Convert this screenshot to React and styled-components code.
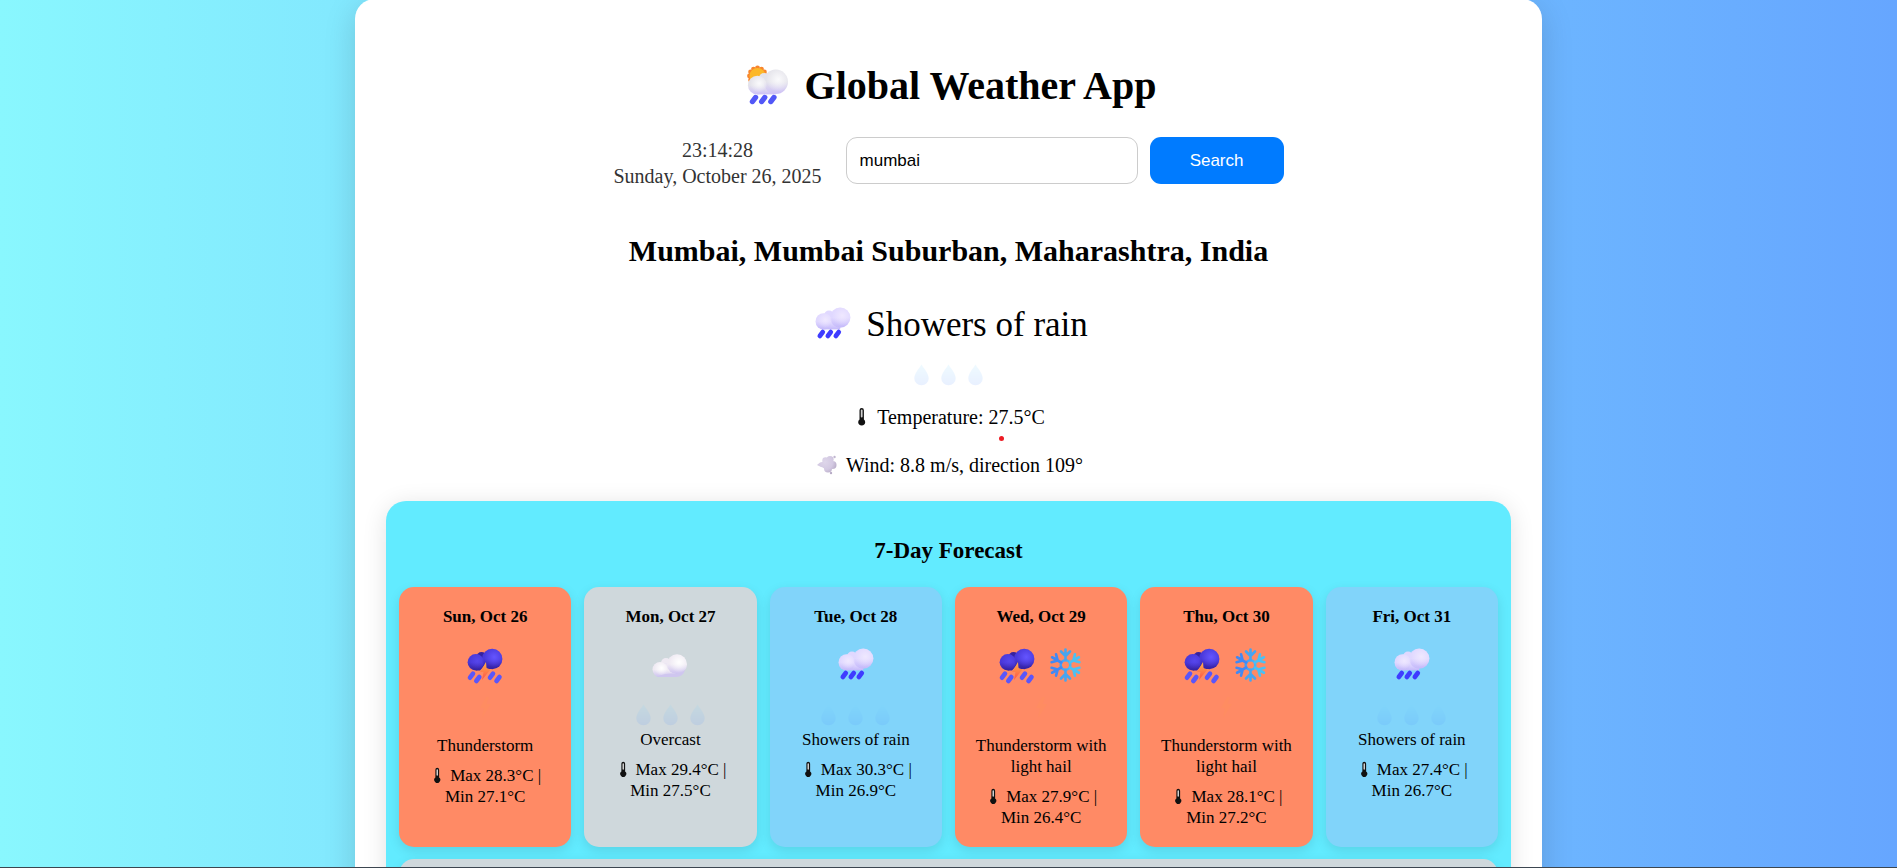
import React, { useState } from "react";
import styled, { createGlobalStyle } from "styled-components";

const GlobalStyle = createGlobalStyle`
  * { box-sizing: border-box; }
  html { scrollbar-width: none; }
  body {
    margin: 0;
    color: #000;
    font-family: "Liberation Serif", "Times New Roman", serif;
    background: linear-gradient(to right, #89f7fe, #66a6ff);
  }
`;

const Page = styled.div`
  min-height: 100vh;
  display: flex;
  justify-content: center;
  align-items: flex-start;
`;

const WindowEdge = styled.div`
  position: fixed;
  left: 0;
  right: 0;
  bottom: 0;
  height: 1px;
  background: #3c4650;
`;

const Panel = styled.main`
  width: 90%;
  max-width: 1187px;
  margin-top: -1px;
  padding: 60px 31px 31px;
  display: flex;
  flex-direction: column;
  align-items: center;
  background: #fff;
  border-radius: 20px;
  box-shadow: 0 8px 32px rgba(0, 0, 0, 0.15);
`;

const Title = styled.h1`
  margin: 0 0 24px;
  display: flex;
  align-items: center;
  gap: 10px;
  font-size: 40px;
  line-height: 46px;
`;

const Toolbar = styled.div`
  display: flex;
  align-items: flex-start;
  flex-wrap: wrap;
  justify-content: center;
  gap: 24px;
`;

const Clock = styled.div`
  color: #333;
  font-size: 20px;
  line-height: 26px;
  text-align: center;
`;

const SearchForm = styled.form`
  display: flex;
  gap: 12px;
`;

const SearchInput = styled.input`
  width: 292px;
  height: 47px;
  padding: 0 13px;
  border: 1px solid #ccc;
  border-radius: 11px;
  outline: none;
  background: #fff;
  color: #000;
  font: 17px "Liberation Sans", Arial, sans-serif;
`;

const SearchButton = styled.button`
  width: 134px;
  height: 47px;
  border: 0;
  border-radius: 11px;
  background: #007bff;
  color: #fff;
  font: 17px "Liberation Sans", Arial, sans-serif;
  cursor: pointer;
`;

const Location = styled.h2`
  margin: 45px 0 33px;
  font-size: 30px;
  line-height: 34px;
  text-align: center;
`;

const Condition = styled.div`
  display: flex;
  align-items: center;
  gap: 9px;
  font-size: 35px;
  line-height: 40px;
`;

const Drops = styled.div`
  display: flex;
  justify-content: center;
  opacity: 0.12;
`;

const CurrentEffect = styled.div`
  margin: 12px 0 16px;
`;

const Reading = styled.p`
  margin: 0 0 24px;
  display: flex;
  align-items: center;
  gap: 5px;
  font-size: 20px;
  line-height: 24px;
`;

const Degrees = styled.span`
  position: relative;
`;

const Marker = styled.span`
  position: absolute;
  left: 11px;
  bottom: -13px;
  width: 5px;
  height: 5px;
  border-radius: 50%;
  background: #ed1c24;
`;

const Forecast = styled.section`
  align-self: stretch;
  padding: 37px 13px 13px;
  background: #62ebff;
  border-radius: 20px;
  box-shadow: 0 4px 24px rgba(0, 0, 0, 0.12);
`;

const ForecastTitle = styled.h3`
  margin: 0 0 23px;
  font-size: 23px;
  line-height: 26px;
  text-align: center;
`;

const Days = styled.div`
  display: flex;
  flex-wrap: wrap;
  gap: 12px 13px;
`;

const tones = { storm: "#ff8a65", cloudy: "#cfd8dc", rain: "#81d4fa" };

const Day = styled.article`
  flex: 1 1 160px;
  min-height: 200px;
  padding: 19px;
  display: flex;
  flex-direction: column;
  align-items: center;
  background: ${({ $tone }) => tones[$tone]};
  border-radius: 15px;
  box-shadow: 0 4px 12px rgba(0, 0, 0, 0.1);
  font-size: 17px;
  line-height: 21px;
  text-align: center;
`;

const DayName = styled.h4`
  margin: 0 0 15px;
  font-size: inherit;
`;

const Symbols = styled.div`
  display: flex;
  height: 48px;
`;

const Effect = styled.div`
  height: ${({ $tall }) => ($tall ? 45 : 39)}px;
  display: flex;
  flex-direction: column;
  justify-content: ${({ $tall }) => ($tall ? "flex-start" : "flex-end")};
`;

const Summary = styled.div`
  margin-bottom: 9px;
`;

const Range = styled.div`
  svg {
    margin-right: 4px;
    vertical-align: -3px;
  }
`;

const Icon = styled.svg.attrs({ "aria-hidden": true })`
  display: block;
  flex: none;
`;

const InlineIcon = styled(Icon)`
  display: inline-block;
`;

const Definitions = styled(Icon)`
  position: absolute;
`;

const puffs = {
  silver: ["#e4e3ea", "#cdc0f7", "#fafafc"],
  shower: ["#e0d8ff", "#c3b8fa", "#efe8ff"],
  white: ["#efeaf3", "#ccc1f0", "#ffffff"],
  storm: ["#4938da", "#34209f", "#6455ff"],
};

function Gradients() {
  return (
    <Definitions width="0" height="0">
      <defs>
        {Object.entries(puffs).map(([name, [top, bottom, glow]]) => (
          <React.Fragment key={name}>
            <linearGradient id={`${name}-body`} x1="0" y1="0" x2="0" y2="1">
              <stop offset="0.5" stopColor={top} />
              <stop offset="1" stopColor={bottom} />
            </linearGradient>
            <radialGradient id={`${name}-glow`} cx="0.6" cy="0.4" r="0.5">
              <stop offset="0" stopColor={glow} />
              <stop offset="1" stopColor={glow} stopOpacity="0" />
            </radialGradient>
          </React.Fragment>
        ))}
        <linearGradient id="bolt" x1="0" y1="0" x2="0" y2="1">
          <stop offset="0" stopColor="#ffb04a" />
          <stop offset="1" stopColor="#ff5248" />
        </linearGradient>
        <linearGradient id="ice" x1="7" y1="0" x2="41" y2="0" gradientUnits="userSpaceOnUse">
          <stop offset="0" stopColor="#3b82f6" />
          <stop offset="1" stopColor="#4fd0f5" />
        </linearGradient>
        <linearGradient id="drop" x1="0" y1="0" x2="0" y2="1">
          <stop offset="0" stopColor="#7fdcff" />
          <stop offset="1" stopColor="#4f8cff" />
        </linearGradient>
        <radialGradient id="dust" cx="11" cy="9" r="13" gradientUnits="userSpaceOnUse">
          <stop offset="0" stopColor="#ded6ea" />
          <stop offset="0.6" stopColor="#d3c9e2" />
          <stop offset="1" stopColor="#b5a9c4" />
        </radialGradient>
      </defs>
    </Definitions>
  );
}

function Puff({ kind, small, mid, big, base }) {
  const left = small[0];
  const right = big[0];
  const top = Math.min(small[1], big[1]);
  return (
    <g>
      <circle cx={mid[0]} cy={mid[1]} r={mid[2]} fill={`url(#${kind}-body)`} />
      <rect x={left} y={top} width={right - left} height={base - top} fill={`url(#${kind}-body)`} />
      <circle cx={small[0]} cy={small[1]} r={small[2]} fill={`url(#${kind}-body)`} />
      <circle cx={big[0]} cy={big[1]} r={big[2]} fill={`url(#${kind}-body)`} />
      <circle cx={small[0]} cy={small[1]} r={small[2]} fill={`url(#${kind}-glow)`} />
      <circle cx={big[0]} cy={big[1]} r={big[2]} fill={`url(#${kind}-glow)`} />
    </g>
  );
}

function Streaks({ points, color, width = 4.6 }) {
  return (
    <g stroke={color} strokeWidth={width} strokeLinecap="round">
      {points.map(([x, y]) => (
        <path key={x} d={`M${x + 1.5} ${y - 2}L${x - 1.5} ${y + 2}`} />
      ))}
    </g>
  );
}

function SunShower() {
  const rays = Array.from({ length: 12 }, (_, i) => (i * Math.PI) / 6);
  return (
    <Icon width="54" height="54" viewBox="0 0 54 54">
      <g fill="#f8862c">
        {rays.map((a) => (
          <circle key={a} cx={16.5 + 8 * Math.cos(a)} cy={17 + 8 * Math.sin(a)} r="2.4" />
        ))}
      </g>
      <circle cx="16.5" cy="17" r="8" fill="#fcb829" />
      <Puff kind="silver" small={[16.3, 26.2, 9.4]} mid={[23, 19, 5]} big={[34.8, 22.8, 12.2]} base={35.4} />
      <Streaks points={[[13, 40.5], [22.2, 40.5], [31.4, 40.5]]} color="#5257f7" width={5.4} />
    </Icon>
  );
}

function Shower() {
  return (
    <Icon width="48" height="48" viewBox="0 0 48 48">
      <Puff kind="shower" small={[14.7, 20.4, 8.2]} mid={[20, 14.5, 5]} big={[31.2, 16.6, 10.2]} base={28.4} />
      <Streaks points={[[12.3, 33], [20.3, 33], [28.3, 33]]} color="#3e3cff" />
    </Icon>
  );
}

function Storm() {
  return (
    <Icon width="48" height="48" viewBox="0 0 48 48">
      <circle cx="20.5" cy="15" r="5" fill="#3522a0" />
      <path d="M15 20L32 14V27H26L24 23L19 28.400H15Z" fill="#3522a8" />
      <circle cx="14.8" cy="20.3" r="8.2" fill="url(#storm-body)" />
      <circle cx="31.2" cy="17" r="10.2" fill="url(#storm-body)" />
      <circle cx="14.8" cy="20.3" r="8.2" fill="url(#storm-glow)" opacity="0.5" />
      <circle cx="31.2" cy="17" r="10.2" fill="url(#storm-glow)" />
      <path d="M25 20L19 30H22.500L21 38L29.500 27.500L25.500 26Z" fill="url(#bolt)" />
      <Streaks points={[[10.5, 33.7], [16.8, 37], [30.5, 33.7], [37, 37]]} color="#5a56fa" />
    </Icon>
  );
}

function Cloud() {
  return (
    <Icon width="48" height="48" viewBox="0 0 48 48">
      <Puff kind="white" small={[14, 27.6, 7.5]} mid={[20, 21, 5]} big={[31, 22.2, 10]} base={35} />
      <path d="M11 34.500Q20 31 27 31.500Q33 33 39 28Q37 35 30 35H14Z" fill="#cfc6ef" />
    </Icon>
  );
}

function Snowflake() {
  return (
    <Icon width="48" height="48" viewBox="0 0 48 48">
      <g fill="none" stroke="#4aa3f0" strokeWidth="2.6" strokeLinecap="round">
        <circle cx="24.5" cy="23" r="4.8" stroke="url(#ice)" />
        {[0, 60, 120, 180, 240, 300].map((a) => (
          <path
            key={a}
            d="M24.500 18V7.500M24.500 14L20 9.500M24.500 14L29 9.500"
            stroke={a === 0 || a === 180 ? "#46a5f1" : a < 180 ? "#4cc0f3" : "#4189f4"}
            transform={`rotate(${a} 24.500 23)`}
          />
        ))}
      </g>
    </Icon>
  );
}

function RainDrops() {
  return (
    <Drops>
      {[0, 1, 2].map((i) => (
        <Icon key={i} width="27" height="28" viewBox="0 0 27 28">
          <path d="M13.500 3.500C14.500 6 20.700 12 20.700 17.200A7.200 7 0 0 1 6.300 17.200C6.300 12 12.500 6 13.500 3.500Z" fill="url(#drop)" />
        </Icon>
      ))}
    </Drops>
  );
}

function Lightning() {
  return (
    <Icon width="27" height="32" viewBox="0 0 27 32" opacity="0.06">
      <path d="M14 7L8 18H12L10 28L19 14H14.500L17 7Z" fill="#ffb02e" />
    </Icon>
  );
}

function Thermometer({ size }) {
  return (
    <InlineIcon width={size} height={size} viewBox="0 0 20 20">
      <path d="M7.500 3.200A2.200 2.200 0 0 1 11.900 3.200V12.400A3.500 3.500 0 1 1 7.500 12.400Z" fill="#111" />
      <path d="M9.700 3.400V9.500" stroke="#fff" strokeOpacity="0.8" strokeWidth="1.800" strokeLinecap="round" />
    </InlineIcon>
  );
}

function Wind() {
  return (
    <Icon width="27" height="24" viewBox="0 0 27 24">
      <g fill="url(#dust)">
        <circle cx="11.500" cy="7.500" r="3.200" />
        <circle cx="16" cy="6.500" r="3.600" />
        <circle cx="18.500" cy="12" r="4" />
        <circle cx="14" cy="15.500" r="4" />
        <circle cx="13" cy="11.500" r="5" />
        <path d="M3 12L6 9.500L10 8.500V15L6 13.500Z" />
        <circle cx="17" cy="20" r="1.200" />
        <circle cx="20.500" cy="4" r="1.200" />
      </g>
    </Icon>
  );
}

const days = [
  { date: "Sun, Oct 26", tone: "storm", icons: [Storm], text: "Thunderstorm", max: "28.3", min: "27.1" },
  { date: "Mon, Oct 27", tone: "cloudy", icons: [Cloud], text: "Overcast", max: "29.4", min: "27.5" },
  { date: "Tue, Oct 28", tone: "rain", icons: [Shower], text: "Showers of rain", max: "30.3", min: "26.9" },
  { date: "Wed, Oct 29", tone: "storm", icons: [Storm, Snowflake], text: "Thunderstorm with light hail", max: "27.9", min: "26.4" },
  { date: "Thu, Oct 30", tone: "storm", icons: [Storm, Snowflake], text: "Thunderstorm with light hail", max: "28.1", min: "27.2" },
  { date: "Fri, Oct 31", tone: "rain", icons: [Shower], text: "Showers of rain", max: "27.4", min: "26.7" },
];

function DayCard({ day }) {
  const storm = day.tone === "storm";
  return (
    <Day $tone={day.tone}>
      <DayName>{day.date}</DayName>
      <Symbols>
        {day.icons.map((Symbol, i) => (
          <Symbol key={i} />
        ))}
      </Symbols>
      <Effect $tall={storm}>{storm ? <Lightning /> : <RainDrops />}</Effect>
      <Summary>{day.text}</Summary>
      <Range>
        <Thermometer size={17} />
        Max {day.max}°C |<br />
        Min {day.min}°C
      </Range>
    </Day>
  );
}

export default function App() {
  const [city, setCity] = useState("mumbai");
  return (
    <Page>
      <GlobalStyle />
      <Gradients />
      <Panel>
        <Title>
          <SunShower />
          Global Weather App
        </Title>
        <Toolbar>
          <Clock>
            <div>23:14:28</div>
            <div>Sunday, October 26, 2025</div>
          </Clock>
          <SearchForm onSubmit={(e) => e.preventDefault()}>
            <SearchInput aria-label="City" value={city} onChange={(e) => setCity(e.target.value)} />
            <SearchButton type="submit">Search</SearchButton>
          </SearchForm>
        </Toolbar>
        <Location>Mumbai, Mumbai Suburban, Maharashtra, India</Location>
        <Condition>
          <Shower />
          Showers of rain
        </Condition>
        <CurrentEffect>
          <RainDrops />
        </CurrentEffect>
        <Reading>
          <Thermometer size={20} />
          <span>
            Temperature:{" "}
            <Degrees>
              27.5°C
              <Marker />
            </Degrees>
          </span>
        </Reading>
        <Reading>
          <Wind />
          Wind: 8.8 m/s, direction 109°
        </Reading>
        <Forecast>
          <ForecastTitle>7-Day Forecast</ForecastTitle>
          <Days>
            {days.map((day) => (
              <DayCard key={day.date} day={day} />
            ))}
            <Day $tone="cloudy" />
          </Days>
        </Forecast>
      </Panel>
      <WindowEdge />
    </Page>
  );
}
